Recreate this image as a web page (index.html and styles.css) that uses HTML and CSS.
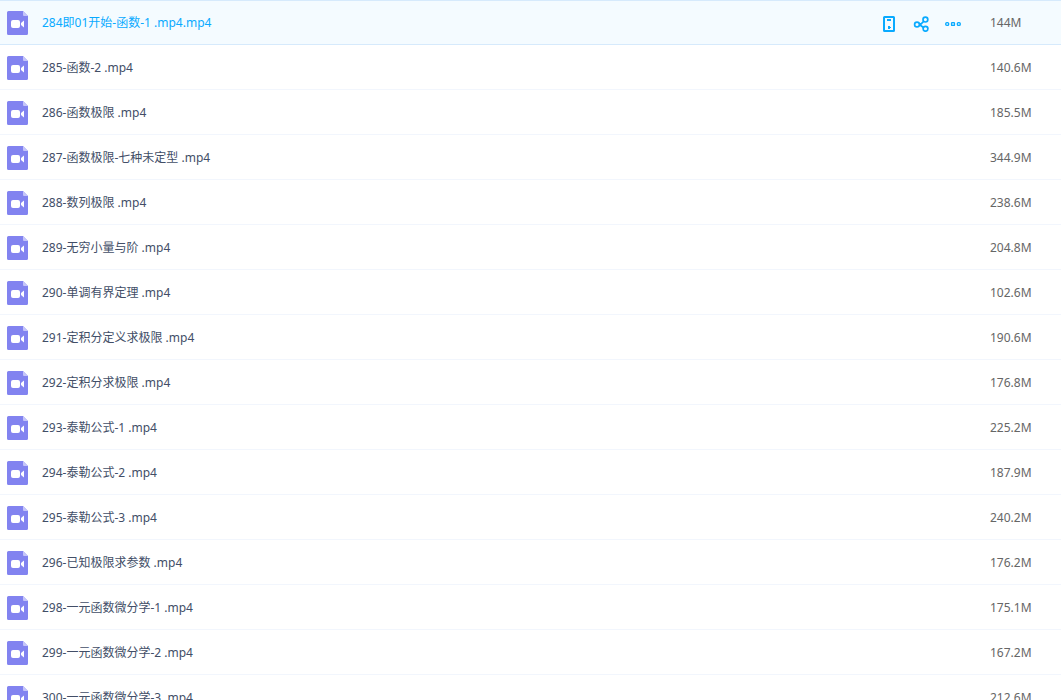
FILE: index.html
```html
<!DOCTYPE html>
<html lang="zh-CN">
<head>
<meta charset="utf-8">
<title>文件列表</title>
<link rel="stylesheet" href="styles.css">
</head>
<body>
<svg class="symbols" aria-hidden="true">
  <symbol id="video" viewBox="0 0 21 24">
    <path fill="#8283f0" d="M1.500 0H16l5 5v17.500a1.500 1.500 0 0 1-1.500 1.500h-18A1.500 1.500 0 0 1 0 22.500v-21A1.500 1.500 0 0 1 1.500 0z"/>
    <path fill="#c5c5f9" d="M16 0l5 5h-4a1 1 0 0 1-1-1z"/>
    <rect x="4" y="9" width="9" height="8" rx="2" fill="#fff"/>
    <path fill="#fff" d="M14 12l3-2.500v7L14 14z"/>
  </symbol>
</svg>
<main class="files">
<table class="file-table">
<tbody>
<tr class="row active">
  <td class="name"><a class="file" href="#"><svg class="file-icon" aria-hidden="true"><use href="#video"/></svg><span>284即01开始-函数-1 .mp4.mp4</span></a></td>
  <td class="tools"><div class="actions">
    <button class="action" type="button" aria-label="发送到手机"><svg viewBox="0 0 16 16" aria-hidden="true"><rect x="3" y="1" width="10" height="14" rx="0.500" fill="none" stroke="#09aaff" stroke-width="2"/><path fill="#09aaff" d="M6 3h4v2H6zM7 10h2v1h1v1H9v1H7z"/></svg></button>
    <button class="action" type="button" aria-label="分享"><svg viewBox="0 0 16 16" aria-hidden="true"><g fill="none" stroke="#09aaff" stroke-width="1.700"><circle cx="4" cy="8.500" r="2.400"/><circle cx="12.400" cy="3.600" r="2.400"/><circle cx="12.500" cy="12.800" r="2.400"/><path d="M6.200 7.800h2l2.300-2.300M7 9l3.500 2.500"/></g></svg></button>
    <button class="action" type="button" aria-label="更多"><svg viewBox="0 0 16 16" aria-hidden="true"><g fill="none" stroke="#09aaff" stroke-width="1.400"><rect x="0.800" y="6.600" width="2.800" height="2.800" rx="1"/><rect x="6.600" y="6.600" width="2.800" height="2.800" rx="0.500"/><rect x="12.400" y="6.600" width="2.800" height="2.800" rx="1"/></g></svg></button>
  </div></td>
  <td class="size">144M</td>
</tr>
<tr class="row"><td class="name" colspan="2"><a class="file" href="#"><svg class="file-icon" aria-hidden="true"><use href="#video"/></svg><span>285-函数-2 .mp4</span></a></td><td class="size">140.6M</td></tr>
<tr class="row"><td class="name" colspan="2"><a class="file" href="#"><svg class="file-icon" aria-hidden="true"><use href="#video"/></svg><span>286-函数极限 .mp4</span></a></td><td class="size">185.5M</td></tr>
<tr class="row"><td class="name" colspan="2"><a class="file" href="#"><svg class="file-icon" aria-hidden="true"><use href="#video"/></svg><span>287-函数极限-七种未定型 .mp4</span></a></td><td class="size">344.9M</td></tr>
<tr class="row"><td class="name" colspan="2"><a class="file" href="#"><svg class="file-icon" aria-hidden="true"><use href="#video"/></svg><span>288-数列极限 .mp4</span></a></td><td class="size">238.6M</td></tr>
<tr class="row"><td class="name" colspan="2"><a class="file" href="#"><svg class="file-icon" aria-hidden="true"><use href="#video"/></svg><span>289-无穷小量与阶 .mp4</span></a></td><td class="size">204.8M</td></tr>
<tr class="row"><td class="name" colspan="2"><a class="file" href="#"><svg class="file-icon" aria-hidden="true"><use href="#video"/></svg><span>290-单调有界定理 .mp4</span></a></td><td class="size">102.6M</td></tr>
<tr class="row"><td class="name" colspan="2"><a class="file" href="#"><svg class="file-icon" aria-hidden="true"><use href="#video"/></svg><span>291-定积分定义求极限 .mp4</span></a></td><td class="size">190.6M</td></tr>
<tr class="row"><td class="name" colspan="2"><a class="file" href="#"><svg class="file-icon" aria-hidden="true"><use href="#video"/></svg><span>292-定积分求极限 .mp4</span></a></td><td class="size">176.8M</td></tr>
<tr class="row"><td class="name" colspan="2"><a class="file" href="#"><svg class="file-icon" aria-hidden="true"><use href="#video"/></svg><span>293-泰勒公式-1 .mp4</span></a></td><td class="size">225.2M</td></tr>
<tr class="row"><td class="name" colspan="2"><a class="file" href="#"><svg class="file-icon" aria-hidden="true"><use href="#video"/></svg><span>294-泰勒公式-2 .mp4</span></a></td><td class="size">187.9M</td></tr>
<tr class="row"><td class="name" colspan="2"><a class="file" href="#"><svg class="file-icon" aria-hidden="true"><use href="#video"/></svg><span>295-泰勒公式-3 .mp4</span></a></td><td class="size">240.2M</td></tr>
<tr class="row"><td class="name" colspan="2"><a class="file" href="#"><svg class="file-icon" aria-hidden="true"><use href="#video"/></svg><span>296-已知极限求参数 .mp4</span></a></td><td class="size">176.2M</td></tr>
<tr class="row"><td class="name" colspan="2"><a class="file" href="#"><svg class="file-icon" aria-hidden="true"><use href="#video"/></svg><span>298-一元函数微分学-1 .mp4</span></a></td><td class="size">175.1M</td></tr>
<tr class="row"><td class="name" colspan="2"><a class="file" href="#"><svg class="file-icon" aria-hidden="true"><use href="#video"/></svg><span>299-一元函数微分学-2 .mp4</span></a></td><td class="size">167.2M</td></tr>
<tr class="row"><td class="name" colspan="2"><a class="file" href="#"><svg class="file-icon" aria-hidden="true"><use href="#video"/></svg><span>300-一元函数微分学-3 .mp4</span></a></td><td class="size">212.6M</td></tr>
</tbody>
</table>
</main>
</body>
</html>
```

FILE: styles.css
```css
body {
  margin: 0;
  background: #fff;
  font: 12px/18px "Noto Sans", "Noto Sans CJK SC", sans-serif;
  color: #424e67;
}

.symbols {
  display: none;
}

.files {
  height: 100vh;
  overflow: hidden;
}

.file-table {
  width: 100%;
  border-spacing: 0;
}

.row td {
  box-sizing: border-box;
  height: 45px;
  padding: 2px 0 0;
  border-bottom: 1px solid #f2f6fd;
  vertical-align: middle;
}

.row.active td {
  background: #f4fbff;
  border-bottom-color: #d6eafc;
  box-shadow: inset 0 1px #d6eafc;
}

.row .name {
  padding-left: 7px;
}

.file {
  display: flex;
  align-items: center;
  gap: 14px;
  color: inherit;
  text-decoration: none;
}

.active .file {
  color: #09aaff;
}

.file-icon {
  flex: none;
  width: 21px;
  height: 24px;
}

.row .tools {
  width: 109px;
  padding-top: 4px;
}

.actions {
  display: flex;
  gap: 16px;
}

.action {
  padding: 0;
  border: 0;
  background: none;
  cursor: pointer;
}

.action svg {
  display: block;
  width: 16px;
  height: 16px;
}

.row .size {
  width: 71px;
  color: #666;
}
```
